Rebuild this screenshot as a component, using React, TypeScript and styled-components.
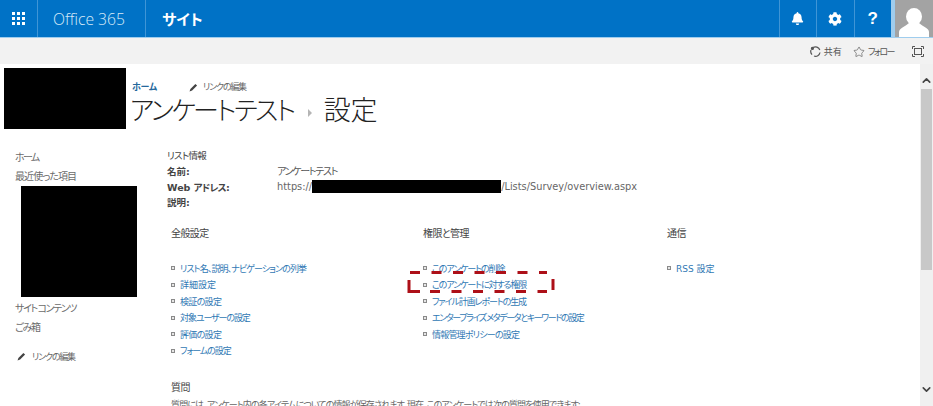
import React from "react";
import styled, { createGlobalStyle } from "styled-components";
import { Star, ChevronUp, ChevronDown } from "lucide-react";
import { FaBell, FaCog } from "react-icons/fa";

const Global = createGlobalStyle`
  html, body { margin: 0; padding: 0; background: #fff; overflow: hidden; }
  body { font-family: "Noto Sans CJK JP", "Liberation Sans", sans-serif; }
  * { box-sizing: border-box; }
`;

const JP = `"Noto Sans CJK JP", sans-serif`;
const LATIN = `"DejaVu Sans", "Noto Sans CJK JP", sans-serif`;

const Page = styled.div`
  position: relative;
  width: 933px;
  height: 406px;
  overflow: hidden;
  display: flex;
  flex-direction: column;
  font-feature-settings: "palt";
`;

const TopBar = styled.header`
  flex: none;
  height: 38px;
  display: flex;
  align-items: stretch;
  background: #0072c6;
  border-bottom: 1px solid #9fcdee;
`;
const Waffle = styled.div`
  width: 38px;
  display: flex;
  align-items: center;
  justify-content: center;
  border-right: 1px solid #3f95d6;
  color: #fff;
`;
const Brand = styled.div`
  width: 108px;
  padding-left: 15px;
  display: flex;
  align-items: center;
  border-right: 1px solid #3f95d6;
  font-family: "Open Sans", sans-serif;
  font-weight: 300;
  font-size: 15.7px;
  color: #d8eaf8;
  white-space: nowrap;
`;
const SiteName = styled.div`
  flex: 1;
  padding-left: 16px;
  display: flex;
  align-items: center;
  font-family: ${JP};
  font-weight: 700;
  font-size: 15px;
  letter-spacing: 0.2px;
  color: #fff;
`;
const BarButton = styled.div`
  width: 37.5px;
  display: flex;
  align-items: center;
  justify-content: center;
  border-left: 1px solid #3f95d6;
  color: #fff;
  font-family: "Liberation Sans", sans-serif;
  font-weight: 700;
  font-size: 17px;
`;
const Avatar = styled.div`
  flex: none;
  width: 42px;
  border-left: 4px solid #9fcdee;
  background: #a3a3a3;
  display: flex;
  align-items: flex-end;
  overflow: hidden;
`;

const Ribbon = styled.div`
  flex: none;
  height: 26px;
  padding: 1px 9px 0 0;
  background: #f2f2f2;
  display: flex;
  align-items: center;
  justify-content: flex-end;
  color: #555;
  font-size: 9px;
`;
const RibbonAction = styled.div<{ $gap: number; $ls: number }>`
  display: flex;
  align-items: center;
  gap: 3px;
  margin-right: ${(p) => p.$gap}px;
  letter-spacing: ${(p) => p.$ls}px;
  white-space: nowrap;
`;

const Body = styled.div`
  flex: 1;
  min-height: 0;
  display: flex;
`;
const Main = styled.main`
  flex: 1;
  min-width: 0;
  overflow: hidden;
`;
const Scrollbar = styled.div`
  flex: none;
  width: 13px;
  background: #f0f0f0;
  display: flex;
  flex-direction: column;
  align-items: center;
  color: #444;
`;
const ScrollArrow = styled.div<{ $top: number }>`
  height: 12px;
  margin-top: ${(p) => p.$top}px;
  display: flex;
  align-items: center;
  justify-content: center;
`;
const Thumb = styled.div`
  width: 11px;
  height: 181px;
  margin-top: 3px;
  background: #c8c8c8;
`;

const Header = styled.div`
  height: 83px;
  padding: 4px 0 0 4px;
  display: flex;
`;
const Redaction = styled.div<{ $w: number; $h: number }>`
  flex: none;
  width: ${(p) => p.$w}px;
  height: ${(p) => p.$h}px;
  background: #000;
`;
const TitleBlock = styled.div`
  margin-left: 6px;
  padding-top: 13px;
`;
const Crumbs = styled.div`
  height: 12px;
  display: flex;
  align-items: center;
`;
const CrumbHome = styled.span`
  width: 57px;
  font-size: 9px;
  font-weight: 700;
  line-height: 12px;
  letter-spacing: -0.3px;
  color: #26689c;
`;
const EditLink = styled.span`
  display: inline-flex;
  align-items: center;
  gap: 5px;
  font-size: 9px;
  line-height: 12px;
  letter-spacing: -1.2px;
  color: #666;
`;
const Title = styled.h1`
  margin: 0;
  height: 32px;
  display: flex;
  align-items: center;
  font-size: 27px;
  line-height: 32px;
  font-weight: 300;
  color: #222;
  white-space: nowrap;
`;
const TitleKana = styled.span`
  margin-left: -2px;
  font-size: 26px;
  letter-spacing: -2.45px;
`;
const TitleArrow = styled.span`
  width: 0;
  height: 0;
  margin: 8px 12px 0 14px;
  border-left: 4px solid #b5b5b5;
  border-top: 4px solid transparent;
  border-bottom: 4px solid transparent;
`;

const Columns = styled.div`
  display: flex;
`;
const Sidebar = styled.nav`
  flex: none;
  width: 167px;
  font-size: 10px;
  padding-left: 15px;
  color: #6b6b6b;
`;
const NavItem = styled.div<{ $ls: number }>`
  height: 19px;
  line-height: 19px;
  letter-spacing: ${(p) => p.$ls}px;
  white-space: nowrap;
`;
const NavBlock = styled.div`
  margin: 1px 0 1px 6px;
`;
const NavEdit = styled.div`
  margin: 11px 0 0 2px;
  height: 19px;
  display: flex;
  align-items: center;
  gap: 6px;
  font-size: 9px;
  letter-spacing: -1.2px;
  color: #666;
`;

const Content = styled.div`
  flex: 1;
  min-width: 0;
`;
const InfoTitle = styled.div`
  height: 16px;
  line-height: 16px;
  font-size: 9.5px;
  letter-spacing: -0.7px;
  color: #444;
`;
const InfoTable = styled.div`
  display: grid;
  grid-template-columns: 110px 1fr;
  grid-auto-rows: 15.7px;
  align-items: center;
`;
const InfoLabel = styled.div`
  font-family: ${LATIN};
  font-size: 9.5px;
  font-weight: 700;
  color: #444;
  white-space: nowrap;
`;
const LabelKana = styled.span`
  letter-spacing: -0.7px;
`;
const InfoValue = styled.div`
  display: flex;
  align-items: center;
  font-family: ${LATIN};
  font-size: 9.8px;
  color: #666;
  white-space: nowrap;
`;
const ValueJP = styled.span`
  font-family: ${JP};
  font-size: 10px;
  letter-spacing: -1.3px;
  color: #555;
`;

const SettingsGrid = styled.div`
  margin: 15px 0 0 4px;
  display: grid;
  grid-template-columns: 252px 244px 1fr;
`;
const SectionTitle = styled.div`
  height: 16px;
  line-height: 16px;
  font-size: 10px;
  letter-spacing: -0.6px;
  color: #444;
`;
const LinkList = styled.ul`
  list-style: none;
  margin: 19px 0 0;
  padding: 0;
`;
const LinkRow = styled.li<{ $ls?: number }>`
  height: 16.5px;
  display: flex;
  align-items: center;
  font-size: 9px;
  letter-spacing: ${(p) => p.$ls ?? 0}px;
  color: #2f78b4;
  white-space: nowrap;
`;
const Bullet = styled.span`
  flex: none;
  width: 4px;
  height: 4px;
  margin-right: 5px;
  border: 1px solid #8a8a8a;
  background: #e6e6e6;
`;
const LatinLink = styled.span`
  font-family: ${LATIN};
`;
const QuestionBlock = styled.div`
  margin: 20px 0 0 4px;
`;
const Paragraph = styled.div`
  margin-top: 2px;
  font-size: 9px;
  line-height: 16px;
  letter-spacing: -0.86px;
  color: #666;
  white-space: nowrap;
`;

const Dashed = styled.svg`
  position: absolute;
  left: 406px;
  top: 270px;
`;

const Pencil = () => (
  <svg width="9" height="9" viewBox="0 0 9 9">
    <path d="M0.5 8.5 L1.4 5.9 L6.4 0.9 L8.1 2.6 L3.1 7.6 Z" fill="#444" />
  </svg>
);

const general: [string, number][] = [
  ["リスト名、説明、ナビゲーションの列挙", -0.9],
  ["詳細設定", 0],
  ["検証の設定", -0.7],
  ["対象ユーザーの設定", -1.1],
  ["評価の設定", -0.7],
  ["フォームの設定", -1.1],
];
const perms: [string, number][] = [
  ["このアンケートの削除", -1.1],
  ["このアンケートに対する権限", -1.1],
  ["ファイル計画レポートの生成", -1.1],
  ["エンタープライズ メタデータとキーワードの設定", -1.4],
  ["情報管理ポリシーの設定", -0.8],
];

export default function App() {
  return (
    <Page>
      <Global />
      <TopBar>
        <Waffle>
          <svg width="13" height="13" viewBox="0 0 13 13" fill="#fff">
            {[0, 5, 10].flatMap((x) => [0, 5, 10].map((y) => <rect key={`${x}-${y}`} x={x} y={y} width="3" height="3" />))}
          </svg>
        </Waffle>
        <Brand>Office 365</Brand>
        <SiteName>サイト</SiteName>
        <BarButton><FaBell size={13} /></BarButton>
        <BarButton><FaCog size={14} /></BarButton>
        <BarButton>?</BarButton>
        <Avatar>
          <svg width="38" height="32" viewBox="0 0 38 32" fill="#fff">
            <ellipse cx="19" cy="11.5" rx="8" ry="8.5" />
            <path d="M4 32 V27 C4 23 10 22 14 18 H24 C28 22 34 23 34 27 V32 Z" />
          </svg>
        </Avatar>
      </TopBar>
      <Ribbon>
        <RibbonAction $gap={11} $ls={0}>
          <svg width="11" height="11" viewBox="0 0 11 11" fill="none" stroke="#555" strokeWidth="1.2">
            <path d="M3 1.6 A4.5 4.5 0 0 1 9.8 4 M10 6.5 A4.5 4.5 0 0 1 4 10 M2 8.6 A4.5 4.5 0 0 1 1 4" />
            <circle cx="2.4" cy="2.4" r="1" fill="#555" />
          </svg>
          共有
        </RibbonAction>
        <RibbonAction $gap={18} $ls={-1.5}>
          <Star size={12} strokeWidth={1.3} />
          フォロー
        </RibbonAction>
        <svg width="12" height="11" viewBox="0 0 12 11" fill="none" stroke="#555">
          <path d="M0.5 3 V0.5 H3 M9 0.5 H11.5 V3 M11.5 8 V10.5 H9 M3 10.5 H0.5 V8" />
          <rect x="2.5" y="2.5" width="7" height="6" />
        </svg>
      </Ribbon>
      <Body>
        <Main>
          <Header>
            <Redaction $w={122} $h={61} />
            <TitleBlock>
              <Crumbs>
                <CrumbHome>ホーム</CrumbHome>
                <EditLink><Pencil />リンクの編集</EditLink>
              </Crumbs>
              <Title><TitleKana>アンケートテスト</TitleKana><TitleArrow />設定</Title>
            </TitleBlock>
          </Header>
          <Columns>
            <Sidebar>
              <NavItem $ls={-1.7}>ホーム</NavItem>
              <NavItem $ls={-0.9}>最近使った項目</NavItem>
              <NavBlock><Redaction $w={116} $h={111} /></NavBlock>
              <NavItem $ls={-1.4}>サイト コンテンツ</NavItem>
              <NavItem $ls={-1.3}>ごみ箱</NavItem>
              <NavEdit><Pencil />リンクの編集</NavEdit>
            </Sidebar>
            <Content>
              <InfoTitle>リスト情報</InfoTitle>
              <InfoTable>
                <InfoLabel>名前:</InfoLabel>
                <InfoValue><ValueJP>アンケートテスト</ValueJP></InfoValue>
                <InfoLabel>Web <LabelKana>アドレス:</LabelKana></InfoLabel>
                <InfoValue>https://<Redaction $w={189} $h={13} />/Lists/Survey/overview.aspx</InfoValue>
                <InfoLabel>説明:</InfoLabel>
                <InfoValue />
              </InfoTable>
              <SettingsGrid>
                <div>
                  <SectionTitle>全般設定</SectionTitle>
                  <LinkList>
                    {general.map(([t, ls]) => <LinkRow key={t} $ls={ls}><Bullet />{t}</LinkRow>)}
                  </LinkList>
                </div>
                <div>
                  <SectionTitle>権限と管理</SectionTitle>
                  <LinkList>
                    {perms.map(([t, ls]) => <LinkRow key={t} $ls={ls}><Bullet />{t}</LinkRow>)}
                  </LinkList>
                </div>
                <div>
                  <SectionTitle>通信</SectionTitle>
                  <LinkList>
                    <LinkRow><Bullet /><LatinLink>RSS 設定</LatinLink></LinkRow>
                  </LinkList>
                </div>
              </SettingsGrid>
              <QuestionBlock>
                <SectionTitle>質問</SectionTitle>
                <Paragraph>質問には、アンケート内の各アイテムについての情報が保存されます。現在、このアンケートでは次の質問を使用できます:</Paragraph>
              </QuestionBlock>
            </Content>
          </Columns>
        </Main>
        <Scrollbar>
          <ScrollArrow $top={10}><ChevronUp size={13} strokeWidth={3} /></ScrollArrow>
          <Thumb />
          <ScrollArrow $top={113}><ChevronDown size={13} strokeWidth={3} /></ScrollArrow>
        </Scrollbar>
      </Body>
      <Dashed width="150" height="26" viewBox="0 0 150 26" fill="none" stroke="#ad1018" strokeWidth="3">
        <path d="M4 2.5 H141" strokeDasharray="10 11.5" />
        <path d="M3 10 V21.5 H14" />
        <path d="M24 21.5 H141" strokeDasharray="10 11.5" />
        <path d="M147 9 V20" />
      </Dashed>
    </Page>
  );
}
